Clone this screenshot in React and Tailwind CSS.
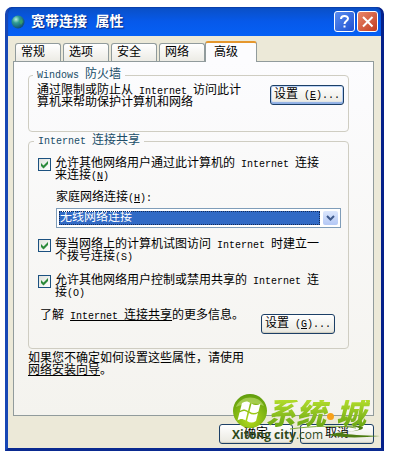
import React, { useState } from 'react';

const tabs = ['常规', '选项', '安全', '网络', '高级'];

// Latin text next to the Chinese glyphs, half as wide as one of them
const En = ({ children }) => <span className="text-[10px] leading-none whitespace-pre">{children}</span>;

const XpButton = ({ children, focused }) => (
  <button
    type="button"
    className={`h-5 w-[74px] shrink-0 rounded-[3px] border border-[#1c3f66] bg-linear-to-b from-white to-[#e9e8e0] text-center whitespace-nowrap ${focused ? 'shadow-[inset_0_-2px_1px_#8fb0e6,inset_0_0_0_1px_#bcd3f5]' : 'shadow-[inset_0_-1px_1px_#cfccbe]'}`}
  >
    {children}
  </button>
);

const GroupBox = ({ title, className, children }) => (
  <fieldset className={`min-w-0 rounded-[4px] border border-[#cfcdc2] ${className}`}>
    <legend className="-ml-1 px-1 text-[#204d68]">{title}</legend>
    {children}
  </fieldset>
);

const CheckRow = ({ className, children }) => {
  const [checked, setChecked] = useState(true);

  return (
    <label className={`flex items-start gap-1 ${className}`}>
      <span className="grid shrink-0">
        <input
          type="checkbox"
          checked={checked}
          onChange={(e) => setChecked(e.target.checked)}
          className="col-start-1 row-start-1 size-[13px] appearance-none border border-[#1c5180] bg-linear-to-br from-[#dfe2dc] to-white"
        />
        {checked && (
          <svg viewBox="0 0 13 13" className="pointer-events-none col-start-1 row-start-1 size-[13px]">
            <path d="M3 5v3l2.500 2.500L10 6V3L5.500 7.500z" fill="#2b8a3a" />
          </svg>
        )}
      </span>
      <span className="whitespace-nowrap">{children}</span>
    </label>
  );
};

const TitleBar = () => (
  <header className="flex h-[29px] items-center rounded-t-[6px] bg-linear-to-b from-[#0a4fc4] via-[#0659ea] to-[#0560f5] pr-[3px] pl-[3px] shadow-[inset_0_1px_1px_#0a3fa8]">
    <svg viewBox="0 0 14 14" className="size-[14px]">
      <defs>
        <radialGradient id="globe" cx="0.35" cy="0.3" r="0.8">
          <stop offset="0" stopColor="#b8f0dc" />
          <stop offset="0.35" stopColor="#2f9d94" />
          <stop offset="1" stopColor="#0b3f6d" />
        </radialGradient>
      </defs>
      <circle cx="7" cy="7" r="6.500" fill="url(#globe)" />
      <path d="M8 6l3-2 1 3-2 3z" fill="#3fae62" opacity="0.7" />
    </svg>
    <h1 className="ml-[6px] flex-1 text-sm font-bold text-white [text-shadow:1px_1px_1px_#0a2a80]">宽带连接 属性</h1>
    <div className="flex gap-[2px]">
      <button type="button" aria-label="帮助" className="flex size-[21px] items-center justify-center rounded-[3px] border border-white bg-linear-to-br from-[#5b8df0] to-[#1f4fd0]">
        <svg viewBox="0 0 19 19" className="size-[19px]" fill="none" stroke="#fff" strokeWidth="2">
          <path d="M6 7c0-4 7-4 7-.5 0 2.500-3.500 2.500-3.500 5.500M9.500 13.500v2" />
        </svg>
      </button>
      <button type="button" aria-label="关闭" className="flex size-[21px] items-center justify-center rounded-[3px] border border-white bg-linear-to-br from-[#e8866a] to-[#c23a1c]">
        <svg viewBox="0 0 19 19" className="size-[19px]" stroke="#fff" strokeWidth="2">
          <path d="M5 5l9.500 9.500M14.500 5L5 14.500" />
        </svg>
      </button>
    </div>
  </header>
);

const SiteMark = () => (
  <div className="pointer-events-none absolute right-[3px] bottom-1 h-[51px] w-[146px]">
    <svg viewBox="0 0 146 51" className="absolute inset-0 size-full overflow-visible">
      <defs>
        <radialGradient id="orb" cx="0.5" cy="0.75" r="0.75">
          <stop offset="0" stopColor="#b5dc1c" />
          <stop offset="1" stopColor="#5f9c0c" />
        </radialGradient>
      </defs>
      <circle cx="18" cy="18" r="17" fill="url(#orb)" />
      <path d="M4 14C8 2 27 1 32 13 24 9 13 10 4 14z" fill="#d2ec8c" opacity="0.5" />
      <path d="M10 10c3-2 6-2 8 0l-2 8c-3-2-5-2-8 0zM19.500 10.500c3 2 6 2 9 0l-2 8c-3 2-6 2-9 0zM7.500 19.500c3-2 6-2 8 0l-2 8c-3-2-5-2-8 0zM17 20c3 2 6 2 9 0l-2 8c-3 2-6 2-9 0z" fill="#fff" />
      <path d="M58 36c22-3 50-4 66-1" fill="none" stroke="#7fa83a" strokeWidth="1" />
      <path d="M108 34c12-1 20 0 19 2-2 3-20 2-30 6 12 3 32 3 51 1-18-1-32-1-38-3 8-2 20-2 21-5 0-3-12-3-23-1z" fill="#4e7d12" />
    </svg>
    <span className="absolute top-[7px] left-[34px] bg-linear-to-b from-[#b2dc2c] to-[#5c9d0e] bg-clip-text pr-1 text-[30px] leading-[32px] font-black text-transparent italic">系统</span>
    <span className="absolute top-[20px] left-[95px] size-[7px] rounded-full bg-[#f7a11a]" />
    <span className="absolute top-[7px] left-[104px] bg-linear-to-b from-[#b2dc2c] to-[#5c9d0e] bg-clip-text pr-1 text-[30px] leading-[32px] font-black text-transparent italic">城</span>
    <span className="absolute top-[35px] left-0 font-['Open_Sans',sans-serif] text-[12px] leading-[14px] whitespace-nowrap text-[#2f4a1c]">
      <b>Xitong city</b>.com
    </span>
  </div>
);

export default function App() {
  const [active, setActive] = useState('高级');

  return (
    <div className="bg-white pt-[7px] pr-[31px] pb-[17px] pl-[5px] font-['Liberation_Mono','Noto_Sans_CJK_SC',monospace] text-xs leading-3 text-black">
      <main className="relative rounded-t-[7px] border-r-[3px] border-b-[3px] border-l-[3px] border-r-[#04208a] border-b-[#0a2a90] border-l-[#1747b5] bg-[#04208a]">
        <TitleBar />
        <div className="bg-[#ece9d8] pt-[5px] pr-[7px] pb-1 pl-[5px]">
          <div role="tablist" className="flex items-end pl-[2px]">
            {tabs.map((tab) => (
              <button
                key={tab}
                type="button"
                role="tab"
                aria-selected={tab === active}
                onClick={() => setActive(tab)}
                className={
                  tab === active
                    ? 'relative -mb-px -ml-[2px] h-[21px] w-[52px] rounded-t-[3px] border-x border-t-2 border-x-[#919b9c] border-t-[#e5972d] bg-[#fcfcfe] pr-[14px] pl-1'
                    : 'mr-[2px] h-[18px] w-[46px] rounded-t-[3px] border border-b-0 border-[#919b9c] bg-linear-to-b from-white to-[#ecebe5] pr-[10px]'
                }
              >
                {tab}
              </button>
            ))}
          </div>

          <section role="tabpanel" className="border border-[#919b9c] bg-linear-to-b from-[#fcfcfe] to-[#f4f3ee] pt-[7px] pr-6 pb-[38px] pl-[14px]">
            <GroupBox title={<><En>Windows </En>防火墙</>} className="h-[63px] pr-1 pl-2">
              <div className="flex items-start justify-between pt-1">
                <p className="whitespace-nowrap">
                  通过限制或防止从<En> Internet </En>访问此计
                  <br />
                  算机来帮助保护计算机和网络
                </p>
                <XpButton focused>设置<En> (<u>E</u>)...</En></XpButton>
              </div>
            </GroupBox>

            <GroupBox title={<><En>Internet </En>连接共享</>} className="mt-[3px] pr-[7px] pb-[14px] pl-[9px]">
              <CheckRow className="mt-[11px]">
                允许其他网络用户通过此计算机的<En> Internet </En>连接
                <br />
                来连接<En>(<u>N</u>)</En>
              </CheckRow>

              <div className="mt-[10px] ml-[18px]">
                <label htmlFor="home-network">家庭网络连接<En>(<u>H</u>):</En></label>
                <div className="mt-1 flex h-5 border border-[#7f9db9] bg-white p-[2px]">
                  <select id="home-network" className="min-w-0 flex-1 appearance-none bg-[#316ac5] pl-px leading-[14px] text-white outline-1 -outline-offset-1 outline-[#142c58] outline-dotted">
                    <option>无线网络连接</option>
                  </select>
                  <span className="ml-[3px] flex w-[15px] items-center justify-center rounded-[2px] bg-linear-to-b from-[#dce7fd] to-[#b4c8f5]">
                    <svg viewBox="0 0 9 6" className="h-[6px] w-[9px]">
                      <path d="M1 1l3.500 3.500L8 1" fill="none" stroke="#3f5a8c" strokeWidth="2" />
                    </svg>
                  </span>
                </div>
              </div>

              <CheckRow className="mt-[11px]">
                每当网络上的计算机试图访问<En> Internet </En>时建立一
                <br />
                个拨号连接<En>(S)</En>
              </CheckRow>
              <CheckRow className="mt-3">
                允许其他网络用户控制或禁用共享的<En> Internet </En>连
                <br />
                接<En>(O)</En>
              </CheckRow>

              <div className="mt-[11px] flex items-start justify-between pr-[6px] pl-[2px]">
                <p className="whitespace-nowrap">
                  了解<En> </En>
                  <a href="#ics" className="underline underline-offset-1"><En>Internet </En>连接共享</a>
                  的更多信息。
                </p>
                <div className="mt-1 flex">
                  <XpButton>设置<En> (<u>G</u>)...</En></XpButton>
                </div>
              </div>
            </GroupBox>

            <p className="mt-1 whitespace-nowrap">
              如果您不确定如何设置这些属性，请使用
              <br />
              <a href="#wizard" className="underline underline-offset-1">网络安装向导</a>。
            </p>
          </section>

          <footer className="mt-2 flex justify-end gap-[7px]">
            <XpButton>确定</XpButton>
            <XpButton>取消</XpButton>
          </footer>
        </div>
        <SiteMark />
      </main>
    </div>
  );
}
